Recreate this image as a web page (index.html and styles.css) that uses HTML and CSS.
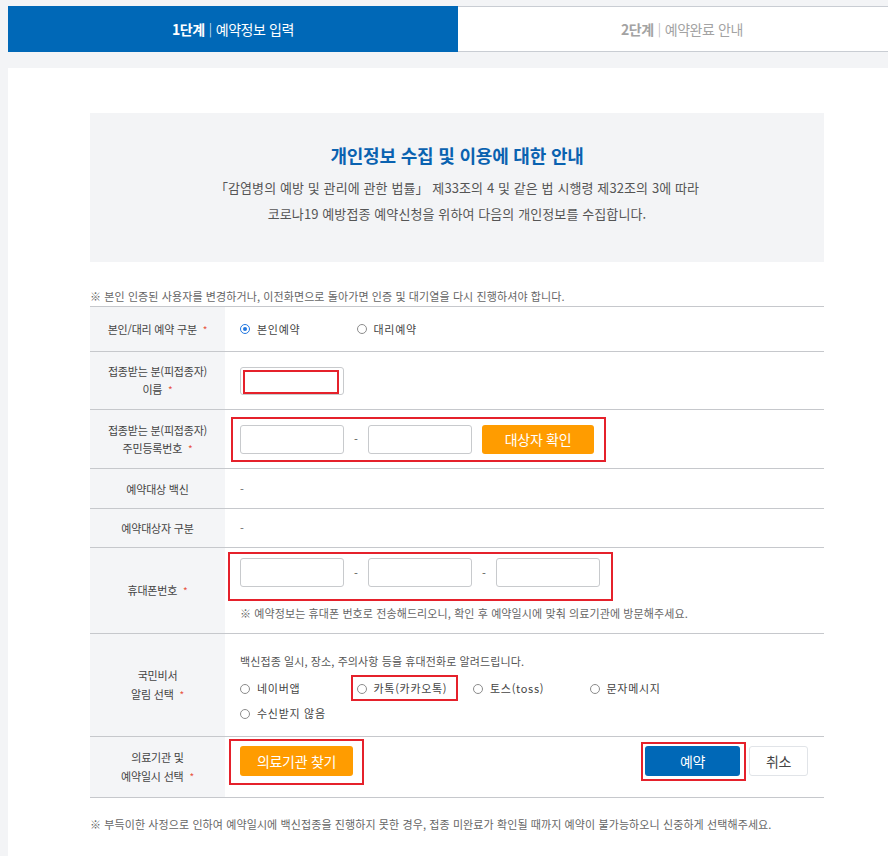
FILE: index.html
```html
<!DOCTYPE html>
<html lang="ko">
<head>
<meta charset="utf-8">
<title>예약정보 입력</title>
<link rel="stylesheet" href="styles.css">
</head>
<body>
<div class="page">
<div class="tabs">
  <div class="tab tab-on"><b>1단계</b><span class="bar">|</span>예약정보 입력</div>
  <div class="tab tab-off"><b>2단계</b><span class="bar">|</span>예약완료 안내</div>
</div>

<div class="panel">
  <div class="infobox">
    <h2 class="info-title">개인정보 수집 및 이용에 대한 안내</h2>
    <p class="info-text">「감염병의 예방 및 관리에 관한 법률」 제33조의 4 및 같은 법 시행령 제32조의 3에 따라<br>코로나19 예방접종 예약신청을 위하여 다음의 개인정보를 수집합니다.</p>
  </div>

  <p class="notice top-notice">※ 본인 인증된 사용자를 변경하거나, 이전화면으로 돌아가면 인증 및 대기열을 다시 진행하셔야 합니다.</p>

  <div class="form">
    <div class="row r1">
      <div class="label"><span>본인/대리 예약 구분 <i class="req">*</i></span></div>
      <div class="value">
        <div class="options">
          <span class="opt"><span class="radio checked"></span>본인예약</span>
          <span class="opt"><span class="radio"></span>대리예약</span>
        </div>
      </div>
    </div>

    <div class="row r2">
      <div class="label"><span>접종받는 분(피접종자)<br>이름 <i class="req">*</i></span></div>
      <div class="value">
        <span class="marked">
          <span class="input"></span>
          <span class="mark mark-name"></span>
        </span>
      </div>
    </div>

    <div class="row r3">
      <div class="label"><span>접종받는 분(피접종자)<br>주민등록번호 <i class="req">*</i></span></div>
      <div class="value">
        <div class="group marked">
          <span class="input"></span>
          <span class="dash">-</span>
          <span class="input"></span>
          <button class="btn btn-orange btn-target">대상자 확인</button>
          <span class="mark mark-rrn"></span>
        </div>
      </div>
    </div>

    <div class="row r4">
      <div class="label"><span>예약대상 백신</span></div>
      <div class="value"><span class="none">-</span></div>
    </div>

    <div class="row r5">
      <div class="label"><span>예약대상자 구분</span></div>
      <div class="value"><span class="none">-</span></div>
    </div>

    <div class="row r6">
      <div class="label"><span>휴대폰번호 <i class="req">*</i></span></div>
      <div class="value value-col">
        <div class="group marked">
          <span class="input"></span>
          <span class="dash">-</span>
          <span class="input"></span>
          <span class="dash">-</span>
          <span class="input"></span>
          <span class="mark mark-phone"></span>
        </div>
        <p class="notice phone-notice">※ 예약정보는 휴대폰 번호로 전송해드리오니, 확인 후 예약일시에 맞춰 의료기관에 방문해주세요.</p>
      </div>
    </div>

    <div class="row r7">
      <div class="label label-tall"><span>국민비서<br>알림 선택 <i class="req">*</i></span></div>
      <div class="value value-col value-top">
        <p class="sub">백신접종 일시, 장소, 주의사항 등을 휴대전화로 알려드립니다.</p>
        <div class="options grid-options">
          <span class="opt"><span class="radio"></span>네이버앱</span>
          <span class="opt marked"><span class="radio"></span>카톡(카카오톡)<span class="mark mark-kakao"></span></span>
          <span class="opt"><span class="radio"></span>토스(toss)</span>
          <span class="opt"><span class="radio"></span>문자메시지</span>
          <span class="opt"><span class="radio"></span>수신받지 않음</span>
        </div>
      </div>
    </div>

    <div class="row r8">
      <div class="label label-tall"><span>의료기관 및<br>예약일시 선택 <i class="req">*</i></span></div>
      <div class="value value-top actions">
        <span class="marked">
          <button class="btn btn-orange btn-find">의료기관 찾기</button>
          <span class="mark mark-find"></span>
        </span>
        <span class="right-btns">
          <span class="marked">
            <button class="btn btn-blue btn-reserve">예약</button>
            <span class="mark mark-reserve"></span>
          </span>
          <button class="btn btn-cancel">취소</button>
        </span>
      </div>
    </div>
  </div>

  <p class="notice bottom-notice">※ 부득이한 사정으로 인하여 예약일시에 백신접종을 진행하지 못한 경우, 접종 미완료가 확인될 때까지 예약이 불가능하오니 신중하게 선택해주세요.</p>
</div>
</div>
</body>
</html>
```

FILE: styles.css
```css
* { box-sizing: border-box; }

html, body {
  margin: 0;
  padding: 0;
}

body {
  background: #f3f4f6;
  font-family: "Noto Sans CJK KR", "Noto Sans", sans-serif;
  color: #333;
  padding-top: 6px;
  overflow: hidden;
}

.page {
  width: 898px;
  margin-left: 8px;
}

/* tabs */
.tabs {
  display: flex;
  height: 46px;
}
.tab {
  display: flex;
  align-items: center;
  justify-content: center;
  font-size: 14px;
  letter-spacing: -0.4px;
  line-height: 20px;
}
.tab b { font-weight: 700; }
.tab .bar { font-weight: 300; margin: 0 4px; font-size: 13px; }
.tab-on {
  width: 450px;
  background: #0068b7;
  color: #fff;
}
.tab-off {
  flex: 1;
  background: #fff;
  color: #a3a3a3;
  border-top: 1px solid #c9cdd3;
  border-bottom: 1px solid #c9cdd3;
}

/* panel */
.panel {
  margin-top: 16px;
  background: #fff;
  padding: 45px 82px 40px 82px;
  min-height: 800px;
}

.infobox {
  background: #f3f4f6;
  height: 149px;
  padding-top: 30px;
  text-align: center;
}
.info-title {
  margin: 0;
  font-size: 18px;
  line-height: 24px;
  font-weight: 700;
  color: #0a62b0;
  letter-spacing: -0.2px;
}
.info-text {
  margin: 8px 0 0;
  font-size: 13px;
  line-height: 26px;
  color: #555;
  letter-spacing: 0.1px;
}

.notice {
  margin: 0;
  font-size: 11px;
  line-height: 16px;
  color: #666;
  letter-spacing: 0.1px;
}
.top-notice {
  margin-top: 26px;
  margin-bottom: 2px;
}

/* form */
.form {
  border-top: 1px solid #c6c8cc;
}
.row {
  display: grid;
  grid-template-columns: 135px 1fr;
  border-bottom: 1px solid #c6c8cc;
}
.r1 { height: 45px; }
.r2 { height: 58px; }
.r3 { height: 59px; }
.r4 { height: 40px; }
.r5 { height: 39px; }
.r6 { height: 86px; }
.r7 { height: 103px; }
.r8 { height: 61px; }

.label {
  background: #f4f5f7;
  display: flex;
  align-items: center;
  justify-content: center;
  text-align: center;
  font-size: 11px;
  line-height: 18px;
  color: #444;
  letter-spacing: -0.2px;
}
.label-tall { line-height: 19px; }
.req {
  font-style: normal;
  color: #e8543f;
  font-size: 10px;
  margin-left: 3px;
}

.value {
  display: flex;
  align-items: center;
  padding-left: 15px;
  font-size: 11px;
  color: #444;
}
.value-col {
  flex-direction: column;
  align-items: flex-start;
  justify-content: flex-start;
}
.r6 .value-col { padding-top: 10px; }
.value-top { align-items: flex-start; padding-top: 9px; }
.r7 .value-top { padding-top: 18px; }

.none { color: #666; }

.marked { position: relative; display: inline-flex; }
.mark {
  position: absolute;
  border: 2px solid #e5212b;
  pointer-events: none;
}
.mark-name { top: 3px; left: 3px; right: 5px; bottom: 1px; }
.mark-rrn { top: -8px; left: -9px; right: -12px; bottom: -8px; }
.mark-phone { top: -6px; left: -12px; right: -13px; bottom: -14px; }
.mark-kakao { top: -1px; left: -6px; width: 107px; bottom: 0; }
.mark-find { top: -7px; left: -11px; right: -11px; bottom: -9px; }
.mark-reserve { top: -4px; left: -4px; right: -6px; bottom: -5px; }

.input {
  display: inline-block;
  width: 104px;
  height: 29px;
  background: #fff;
  border: 1px solid #c8cacd;
  border-radius: 3px;
}
.r2 .input { height: 28px; }

.group {
  display: flex;
  align-items: center;
}
.dash {
  width: 24px;
  text-align: center;
  font-size: 11px;
  color: #555;
}

.btn {
  font-family: inherit;
  border: 0;
  border-radius: 3px;
  color: #fff;
  font-size: 14px;
  letter-spacing: -0.3px;
  padding: 0;
  cursor: pointer;
}
.btn-orange { background: #ff9c00; }
.btn-blue { background: #0068b7; }
.btn-target { width: 112px; height: 29px; margin-left: 10px; }
.btn-find { width: 113px; height: 30px; }
.btn-reserve { width: 95px; height: 30px; }
.btn-cancel {
  width: 59px;
  height: 30px;
  background: #fff;
  color: #444;
  border: 1px solid #e1e4e8;
  margin-left: 9px;
}

.actions {
  justify-content: space-between;
  padding-right: 16px;
  padding-top: 9px;
}
.right-btns { display: flex; }

/* radios */
.options {
  display: flex;
  font-size: 11px;
  line-height: 25px;
  color: #444;
  letter-spacing: 0.7px;
}
.grid-options {
  display: grid;
  grid-template-columns: repeat(4, 116.5px);
}
.opt {
  display: inline-flex;
  align-items: center;
  width: 116.5px;
}
.radio {
  width: 10px;
  height: 10px;
  border: 1px solid #8c8c8c;
  border-radius: 50%;
  margin-right: 7px;
  position: relative;
  background: #fff;
  flex: none;
}
.radio.checked { border-color: #2378e0; }
.radio.checked::after {
  content: "";
  position: absolute;
  left: 2px;
  top: 2px;
  width: 4px;
  height: 4px;
  border-radius: 50%;
  background: #2378e0;
}

.sub {
  margin: 0 0 6px;
  font-size: 11px;
  line-height: 18px;
  color: #555;
  letter-spacing: 0.1px;
}
.phone-notice { margin-top: 18px; }

.bottom-notice { margin-top: 18px; }
```
